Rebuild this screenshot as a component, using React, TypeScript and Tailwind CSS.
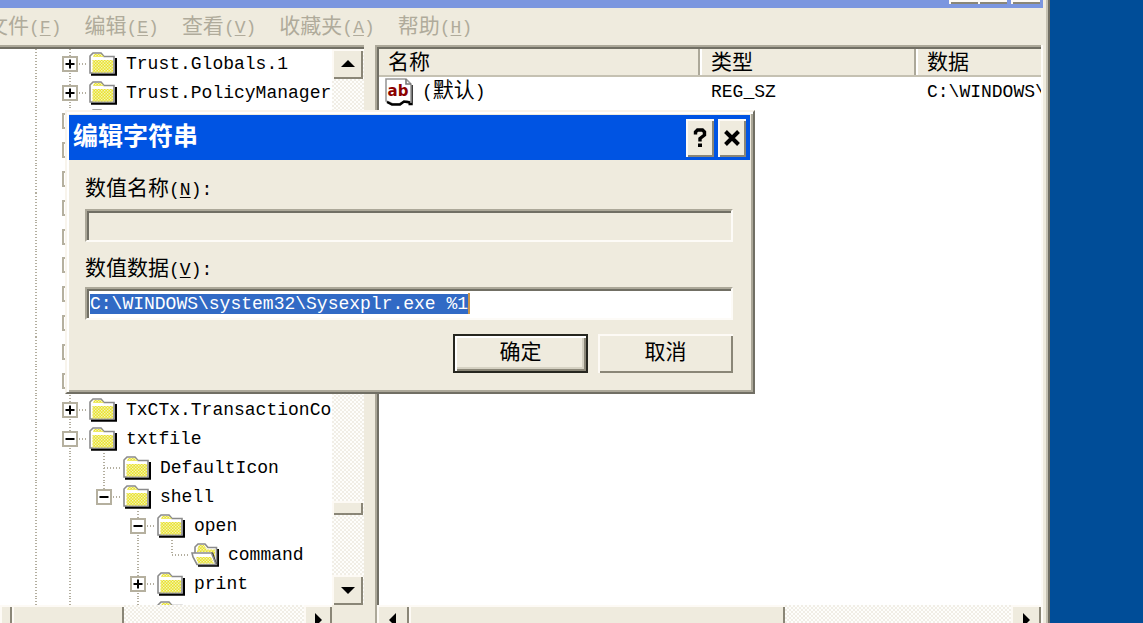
import { useEffect, useRef, useState } from 'react';
import type { ReactNode } from 'react';

interface TreeNode {
  label?: string;
  // one entry per column left of the folder, see Guide
  guides: GuideType[];
  expander?: 'plus' | 'minus';
  open?: boolean;
}

type GuideType = 'line' | 'none' | 'tee' | 'elbow';

const topNodes: TreeNode[] = [
  { label: 'Trust.Globals.1', guides: ['line', 'tee'], expander: 'plus' },
  { label: 'Trust.PolicyManager', guides: ['line', 'tee'], expander: 'plus' },
];

const bottomNodes: TreeNode[] = [
  { label: 'TxCTx.TransactionCo', guides: ['line', 'tee'], expander: 'plus' },
  { label: 'txtfile', guides: ['line', 'tee'], expander: 'minus' },
  { label: 'DefaultIcon', guides: ['line', 'line', 'tee'] },
  { label: 'shell', guides: ['line', 'line', 'elbow'], expander: 'minus' },
  { label: 'open', guides: ['line', 'line', 'none', 'tee'], expander: 'minus' },
  { label: 'command', guides: ['line', 'line', 'none', 'line', 'elbow'], open: true },
  { label: 'print', guides: ['line', 'line', 'none', 'tee'], expander: 'plus' },
  { label: 'printto', guides: ['line', 'line', 'none', 'tee'], expander: 'plus' },
];

const raised = 'bg-[#efebde] shadow-[inset_2px_2px_0_#fdfaf5,inset_-2px_-2px_0_#8a8677]';
const track = 'bg-[repeating-conic-gradient(#fefefc_0_25%,#f1eee6_0_50%)] bg-[length:4px_4px]';

function Guide({ type, expander }: { type: GuideType; expander?: 'plus' | 'minus' }) {
  const horizontal = type === 'tee' || type === 'elbow';
  return (
    <div className="relative flex w-[34px] shrink-0 items-center justify-center">
      <svg className="absolute inset-0 h-full w-full overflow-hidden" stroke="#b3ae9f" strokeWidth="2" aria-hidden="true">
        {type !== 'none' && (
          <line x1="17" y1="0" x2="17" y2={type === 'elbow' ? 15 : 29} strokeDasharray="1 2" />
        )}
        {horizontal && <line x1="17" y1="15" x2="34" y2="15" strokeDasharray="1 2" />}
      </svg>
      {expander && (
        <button
          aria-label={expander === 'plus' ? 'Expand' : 'Collapse'}
          className="relative flex h-4 w-4 items-center justify-center border-2 border-[#b5b09f] bg-white"
        >
          <svg width="10" height="10" viewBox="0 0 10 10" stroke="#000" strokeWidth="2">
            <path d={expander === 'plus' ? 'M0.5 5h9M5 0.5v9' : 'M0.5 5h9'} />
          </svg>
        </button>
      )}
    </div>
  );
}

function Folder({ open }: { open?: boolean }) {
  if (open) {
    return (
      <svg width="28" height="24" viewBox="0 0 28 24" className="shrink-0" aria-hidden="true">
        <path d="M7 22.5h20V6" fill="none" stroke="#000" strokeWidth="2.5" />
        <path d="M4 10V4l3-3h7l3 3.500h8.500V21H6z" fill="#fff" stroke="#8b8b8b" strokeWidth="1.6" />
        <path d="M7 4l1-2h5l3 4.500h8V18L20 9H6z" fill="url(#folderFill)" />
        <path d="M20 9.500h2l4 12h-2z" fill="#111" />
        <path d="M1 10h19.500l4.500 11.500H6L2 14z" fill="#fff" stroke="#8b8b8b" strokeWidth="1.6" />
        <path d="M5 14h15l3 6.500H7z" fill="url(#folderFill)" />
      </svg>
    );
  }
  return (
    <svg width="28" height="24" viewBox="0 0 28 24" className="shrink-0" aria-hidden="true">
      <path d="M2 22.5h25V6" fill="none" stroke="#000" strokeWidth="2.5" />
      <path d="M1 21V4l3-3h8l3 3.5h10V21z" fill="#fff" stroke="#8b8b8b" strokeWidth="1.6" />
      <path d="M5 2h7l3 3H4z" fill="url(#folderFill)" />
      <path d="M3.5 8H24v12.5H3.5z" fill="url(#folderFill)" />
    </svg>
  );
}

function TreeRow({ node }: { node: TreeNode }) {
  return (
    <li className="flex h-[29px] items-stretch pl-[19px]">
      {node.guides.map((g, i) => (
        <Guide key={i} type={g} expander={i === node.guides.length - 1 ? node.expander : undefined} />
      ))}
      <div className="ml-[2px] flex items-center gap-[9px] whitespace-nowrap">
        <Folder open={node.open} />
        {node.label && <span className="pt-px">{node.label}</span>}
      </div>
    </li>
  );
}

function Arrow({ dir }: { dir: 'up' | 'down' | 'left' | 'right' }) {
  const paths = {
    up: 'M1 11L8 4l7 7z',
    down: 'M1 5h14l-7 7z',
    left: 'M11 1v14L4 8z',
    right: 'M5 1v14l7-7z',
  };
  return (
    <svg width="16" height="16" viewBox="0 0 16 16" aria-hidden="true">
      <path d={paths[dir]} />
    </svg>
  );
}

function ScrollButton({ dir, className }: { dir: 'up' | 'down' | 'left' | 'right'; className: string }) {
  return (
    <button aria-label={`Scroll ${dir}`} className={`flex shrink-0 items-center justify-center ${raised} ${className}`}>
      <Arrow dir={dir} />
    </button>
  );
}

function Cn({ children }: { children: ReactNode }) {
  return <span className="text-[21px]">{children}</span>;
}

function MenuBar() {
  const items = [
    ['文件', 'F'],
    ['编辑', 'E'],
    ['查看', 'V'],
    ['收藏夹', 'A'],
    ['帮助', 'H'],
  ];
  return (
    <nav className="-ml-[13px] flex h-[37px] shrink-0 items-center gap-[23px] pt-[3px] whitespace-nowrap text-[#b0ab9b]">
      {items.map(([text, key]) => (
        <button key={key} className="leading-6">
          <Cn>{text}</Cn>(<u className="underline-offset-2">{key}</u>)
        </button>
      ))}
    </nav>
  );
}

function TreePane() {
  return (
    <div className="flex w-[364px] shrink-0 flex-col border-t-2 border-[#aca899]">
      <div className="flex min-h-0 flex-1 border-t-2 border-[#716f64] bg-white">
        <ul className="min-w-0 flex-1 overflow-hidden">
          {topNodes.map((n) => (
            <TreeRow key={n.label} node={n} />
          ))}
          <li>
            <ul className="flex h-[288px] flex-col">
              {Array.from({ length: 10 }, (_, i) => (
                <TreeRow key={i} node={{ guides: ['line', 'tee'], expander: 'plus' }} />
              ))}
            </ul>
          </li>
          {bottomNodes.map((n) => (
            <TreeRow key={n.label} node={n} />
          ))}
        </ul>
        <div className={`flex w-8 shrink-0 flex-col ${track}`}>
          <ScrollButton dir="up" className="h-[30px] w-[31px]" />
          <div className="flex-1" />
          <div className={`h-[14px] w-[31px] ${raised}`} />
          <div className="h-[60px]" />
          <ScrollButton dir="down" className="h-[30px] w-[31px]" />
        </div>
      </div>
      <div className={`-mb-3 flex h-[30px] shrink-0 ${track}`}>
        <div className={`w-3 ${raised}`} />
        <div className={`w-28 ${raised}`} />
        <div className="flex-1" />
        <ScrollButton dir="right" className="w-7" />
        <div className="w-8 bg-[#efebde]" />
      </div>
    </div>
  );
}

function StringIcon() {
  return (
    <svg width="29" height="28" viewBox="0 0 29 28" className="shrink-0" aria-hidden="true">
      <path d="M26.500 7v19h-3" fill="none" stroke="#000" strokeWidth="2.5" />
      <path d="M1 1h20l5 5v18l-4-1-4 1-4 2H8l-4-2-3-1z" fill="#fff" stroke="#9a9a9a" strokeWidth="1.6" />
      <path d="M21 1v5h5" fill="none" stroke="#777" strokeWidth="1.6" />
      <path d="M2 24l5 2.500h8l4-3 6 1" fill="none" stroke="#000" strokeWidth="2.4" />
      <text x="13" y="18" textAnchor="middle" fontFamily="DejaVu Sans" fontWeight="bold" fontSize="15" fill="#8b0000">
        ab
      </text>
    </svg>
  );
}

function ValuePane() {
  const header = 'h-[27px] border-b-2 border-[#c5c1b2] bg-[#efebde] p-0 pt-[3px] pl-[9px] text-left font-normal';
  const divider = 'shadow-[inset_-2px_0_0_#fff,inset_-4px_0_0_#aca899]';
  return (
    <div className="flex min-w-0 flex-1 flex-col border-t-2 border-l-2 border-[#aca899]">
      <div className="min-h-0 flex-1 overflow-hidden border-t-2 border-l-2 border-[#716f64] bg-white">
        <table className="w-full table-fixed border-collapse whitespace-nowrap">
          <thead>
            <tr className="leading-[22px]">
              <th className={`w-[323px] ${header} ${divider}`}><Cn>名称</Cn></th>
              <th className={`w-[216px] ${header} ${divider}`}><Cn>类型</Cn></th>
              <th className={header}><Cn>数据</Cn></th>
            </tr>
          </thead>
          <tbody>
            <tr className="h-[31px] leading-6">
              <td className="p-0 pl-[6px]">
                <div className="flex items-center gap-2">
                  <StringIcon />
                  <span>(<Cn>默认</Cn>)</span>
                </div>
              </td>
              <td className="p-0 pl-[9px]">REG_SZ</td>
              <td className="overflow-hidden p-0 pl-[9px]">C:\WINDOWS\</td>
            </tr>
          </tbody>
        </table>
      </div>
      <div className={`-mb-3 flex h-[30px] shrink-0 ${track}`}>
        <ScrollButton dir="left" className="w-8" />
        <div className={`w-[376px] ${raised}`} />
        <div className="flex-1" />
        <ScrollButton dir="right" className="w-[30px]" />
      </div>
    </div>
  );
}

function EditStringDialog() {
  const [value, setValue] = useState('C:\\WINDOWS\\system32\\Sysexplr.exe %1');
  const input = useRef<HTMLInputElement>(null);

  useEffect(() => {
    input.current?.focus();
    input.current?.select();
  }, []);

  const field =
    'h-[33px] w-full border-2 border-t-[#aca899] border-r-[#fdfbf7] border-b-[#fdfbf7] border-l-[#aca899] px-[3px] leading-[21px] shadow-[inset_2px_2px_0_#716f64] outline-none';

  return (
    <div
      role="dialog"
      aria-labelledby="dialog-title"
      className="absolute top-[110px] left-[65px] w-[690px] border-2 border-t-[#f8f4ec] border-r-[#716f64] border-b-[#716f64] border-l-[#f8f4ec] bg-[#efebde] shadow-[inset_2px_2px_0_#fff,inset_-2px_-2px_0_#aca899]"
    >
      <div className="mt-[3px] mr-[3px] ml-[2px] flex h-[45px] items-center gap-1 bg-[#0054e3] pr-1 pl-1">
        <h1 id="dialog-title" className="flex-1 pt-[3px] text-[25px] leading-8 font-bold text-white">编辑字符串</h1>
        <button aria-label="Help" className={`flex h-[38px] w-7 items-center justify-center ${raised}`}>
          <svg width="14" height="20" viewBox="0 0 14 20" fill="none" stroke="#000" strokeWidth="3.4">
            <path d="M2.5 6.5V4l2-2h5l2 2v3L7 10.500v3" />
            <path d="M7 15.500v3.500" strokeWidth="4" />
          </svg>
        </button>
        <button aria-label="Close" className={`flex h-[38px] w-7 items-center justify-center ${raised}`}>
          <svg width="16" height="16" viewBox="0 0 16 16" stroke="#000" strokeWidth="4">
            <path d="M1.500 1.500l13 13M14.500 1.500l-13 13" />
          </svg>
        </button>
      </div>
      <form className="pt-[18px] pr-5 pb-[19px] pl-[18px]" onSubmit={(e) => e.preventDefault()}>
        <label htmlFor="value-name" className="block h-[31px] leading-6">
          <Cn>数值名称</Cn>(<u className="underline-offset-2">N</u>):
        </label>
        <input id="value-name" readOnly className={`${field} bg-[#efebde]`} />
        <label htmlFor="value-data" className="mt-4 block h-[29px] leading-6">
          <Cn>数值数据</Cn>(<u className="underline-offset-2">V</u>):
        </label>
        <div className="relative">
          <input
            id="value-data"
            ref={input}
            value={value}
            onChange={(e) => setValue(e.target.value)}
            className={`${field} bg-white selection:bg-[#316ac5] selection:text-white`}
          />
          {/* caret after the selection */}
          <span className="absolute top-[6px] left-[383px] h-[21px] w-[2px] bg-[#c9954a]" />
        </div>
        <div className="mt-[14px] flex justify-end gap-[10px]">
          <button className="h-[39px] w-[135px] border-2 border-[#26261f] bg-[#efebde] shadow-[inset_2px_2px_0_#fff,inset_-2px_-2px_0_#8a8677,inset_-4px_-4px_0_#d5d1c2]">
            <Cn>确定</Cn>
          </button>
          <button className={`h-[39px] w-[135px] ${raised}`}>
            <Cn>取消</Cn>
          </button>
        </div>
      </form>
    </div>
  );
}

export default function App() {
  return (
    <div className="relative flex h-screen overflow-hidden bg-[#004d98] font-['Liberation_Mono','Noto_Sans_CJK_SC',monospace] text-[18px] text-black">
      <svg width="0" height="0" className="absolute" aria-hidden="true">
        <defs>
          <pattern id="folderFill" width="3" height="3" patternUnits="userSpaceOnUse">
            <rect width="3" height="3" fill="#e9e32b" />
            <rect width="1.4" height="1.4" fill="#f6f3bb" />
            <rect x="1.5" y="1.5" width="1.4" height="1.4" fill="#f6f3bb" />
          </pattern>
        </defs>
      </svg>
      <main className="mr-[93px] flex min-w-0 flex-1 flex-col border-r-2 border-[#716f64] bg-[#efebde] pr-[5px] shadow-[inset_-2px_0_0_#c5c1b2]">
        <div className="flex h-2 shrink-0 items-end justify-end bg-[#7b96df] pr-[3px] pb-[4px]">
          <button aria-label="Minimize" className={`h-1 w-[29px] ${raised}`} />
          <button aria-label="Maximize" className={`mr-1 h-1 w-[29px] ${raised}`} />
          <button aria-label="Close window" className={`h-1 w-[29px] ${raised}`} />
        </div>
        <MenuBar />
        <div className="flex min-h-0 flex-1 gap-[11px] border-r-2 border-[#fdfbf7]">
          <TreePane />
          <ValuePane />
        </div>
      </main>
      <EditStringDialog />
    </div>
  );
}
